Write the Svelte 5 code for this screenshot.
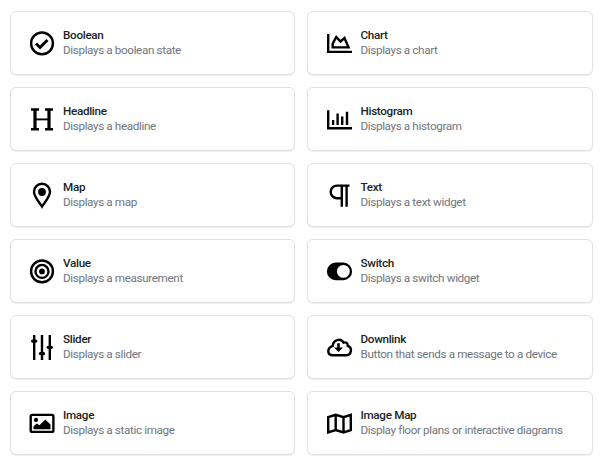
<script>
  const widgets = [
    { icon: 'boolean', title: 'Boolean', text: 'Displays a boolean state' },
    { icon: 'chart', title: 'Chart', text: 'Displays a chart' },
    { icon: 'headline', title: 'Headline', text: 'Displays a headline' },
    { icon: 'histogram', title: 'Histogram', text: 'Displays a histogram' },
    { icon: 'map', title: 'Map', text: 'Displays a map' },
    { icon: 'text', title: 'Text', text: 'Displays a text widget' },
    { icon: 'value', title: 'Value', text: 'Displays a measurement' },
    { icon: 'switch', title: 'Switch', text: 'Displays a switch widget' },
    { icon: 'slider', title: 'Slider', text: 'Displays a slider' },
    { icon: 'downlink', title: 'Downlink', text: 'Button that sends a message to a device' },
    { icon: 'image', title: 'Image', text: 'Displays a static image' },
    { icon: 'plan', title: 'Image Map', text: 'Display floor plans or interactive diagrams' }
  ];
</script>

<main class="grid">
  {#each widgets as w, i}
    <div class="card">
      <svg class="icon" viewBox={i % 2 ? '-0.5 -0.4 26 26' : '0 -0.4 26 26'} aria-hidden="true">
        {#if w.icon === 'boolean'}
          <circle class="line" cx="13" cy="13" r="10.900" />
          <path class="line thick" d="M7 13.100l4 4 7.500-7.600" />
        {:else if w.icon === 'chart'}
          <path class="line" d="M1.700 3.500v18H25.500" />
          <path class="line" d="M6.200 17v-3.800l3.600-6.600 4.200 4.500 4-3.500 4 9.400z" />
        {:else if w.icon === 'headline'}
          <path class="line" d="M2 3.100h8M16 3.100h8M2 22.800h8M16 22.800h8" />
          <path class="line bar" d="M6 13h14" />
          <path class="line stem" d="M6 3v20M20 3v20" />
        {:else if w.icon === 'histogram'}
          <path class="line" d="M1.700 3.800v18H25.500" />
          <path class="line" d="M6.600 13.500v5M11.100 7v11.500M15.700 10v8.500M20.500 5.300v13.200" />
        {:else if w.icon === 'map'}
          <path class="line" d="M13 24.100c-1.800-3.100-8-9.300-8-14.700a8 8 0 0 1 16 0c0 5.400-6.200 11.600-8 14.700z" />
          <circle cx="13" cy="9.600" r="3.900" />
        {:else if w.icon === 'text'}
          <path class="line" d="M23 3.200H10.500a6.300 6.300 0 0 0 0 12.600H15M15.300 3v21.300M20.100 3v21.300" />
        {:else if w.icon === 'value'}
          <circle class="line" cx="13" cy="13" r="10.900" />
          <circle class="line" cx="13" cy="13" r="6.500" />
          <circle cx="13" cy="13" r="2.900" />
        {:else if w.icon === 'switch'}
          <path fill-rule="evenodd" d="M9.200 4.200h7.600a8.800 8.800 0 0 1 0 17.600H9.200a8.800 8.800 0 0 1 0-17.600zM16.900 6.600a6.400 6.400 0 1 0 0 12.800a6.400 6.400 0 0 0 0-12.800z" />
        {:else if w.icon === 'slider'}
          <path class="line" d="M5.200.5v25M13 .5v25M20.800.5v25" />
          <path class="line knob" d="M3.600 6.700h3.200M11.400 19.200h3.200M19.200 12.900h3.200" />
        {:else if w.icon === 'downlink'}
          <path class="line" d="M6.300 20.800h13.300a4.800 4.800 0 0 0 1.700-9.300c.1-3-2.300-4-4.200-3.300-3-5-10.600-2.700-10.800 3.200-6.500 2.200-5.500 9.400 0 9.400z" />
          <path d="M10.700 8.900h2.600v4.100h3.200l-4.500 4.500-4.500-4.500h3.200z" />
        {:else if w.icon === 'image'}
          <rect class="line" x="1.700" y="4.500" width="22.700" height="17" rx="1.500" />
          <circle cx="7" cy="9.500" r="2.100" />
          <path d="M4.500 18.800v-3l3.300-2.600 2.600 1.600L16.300 9l5.200 5.100v4.700z" />
        {:else}
          <path class="line" d="M1.700 6.800l7.500-2.400 7.800 2.400 7.300-2.400v15.300L17 22l-7.800-2.400L1.700 22zM9.200 4.400v15.200M17 6.800V22" />
        {/if}
      </svg>
      <div class="copy">
        <div class="title">{w.title}</div>
        <div class="text">{w.text}</div>
      </div>
    </div>
  {/each}
</main>

<style>
  :global(body) {
    background: #fff;
  }
  .grid {
    box-sizing: border-box;
    height: 463px;
    overflow: hidden;
    display: grid;
    grid-template-columns: 1fr 1fr;
    grid-auto-rows: 64px;
    gap: 12px;
    padding: 11px 9px 0 10px;
    font-family: Roboto, sans-serif;
  }
  .card {
    box-sizing: border-box;
    display: flex;
    align-items: center;
    gap: 8px;
    padding-left: 18px;
    border: 1px solid #e0e1e6;
    border-radius: 6px;
    background: #fff;
    box-shadow: 0 1px 1px rgba(30, 35, 60, 0.08);
  }
  .card:nth-child(odd) {
    margin-right: 0.500px;
  }
  .card:nth-child(even) {
    gap: 8.500px;
    margin-left: -0.500px;
  }
  .icon {
    flex: none;
    width: 26px;
    height: 26px;
    fill: #000;
    overflow: visible;
  }
  .line {
    fill: none;
    stroke: #000;
    stroke-width: 2.400;
  }
  .thick {
    stroke-width: 2.900;
  }
  .stem {
    stroke-width: 3.200;
  }
  .bar {
    stroke-width: 1.900;
  }
  .knob {
    stroke-width: 3.200;
    stroke-linecap: round;
  }
  .copy {
    white-space: nowrap;
    font-size: 11.700px;
    line-height: 15.500px;
    letter-spacing: -0.370px;
  }
  .title {
    color: #1c1f25;
    font-weight: 500;
    letter-spacing: -0.310px;
  }
  .text {
    color: #70757d;
  }
</style>
